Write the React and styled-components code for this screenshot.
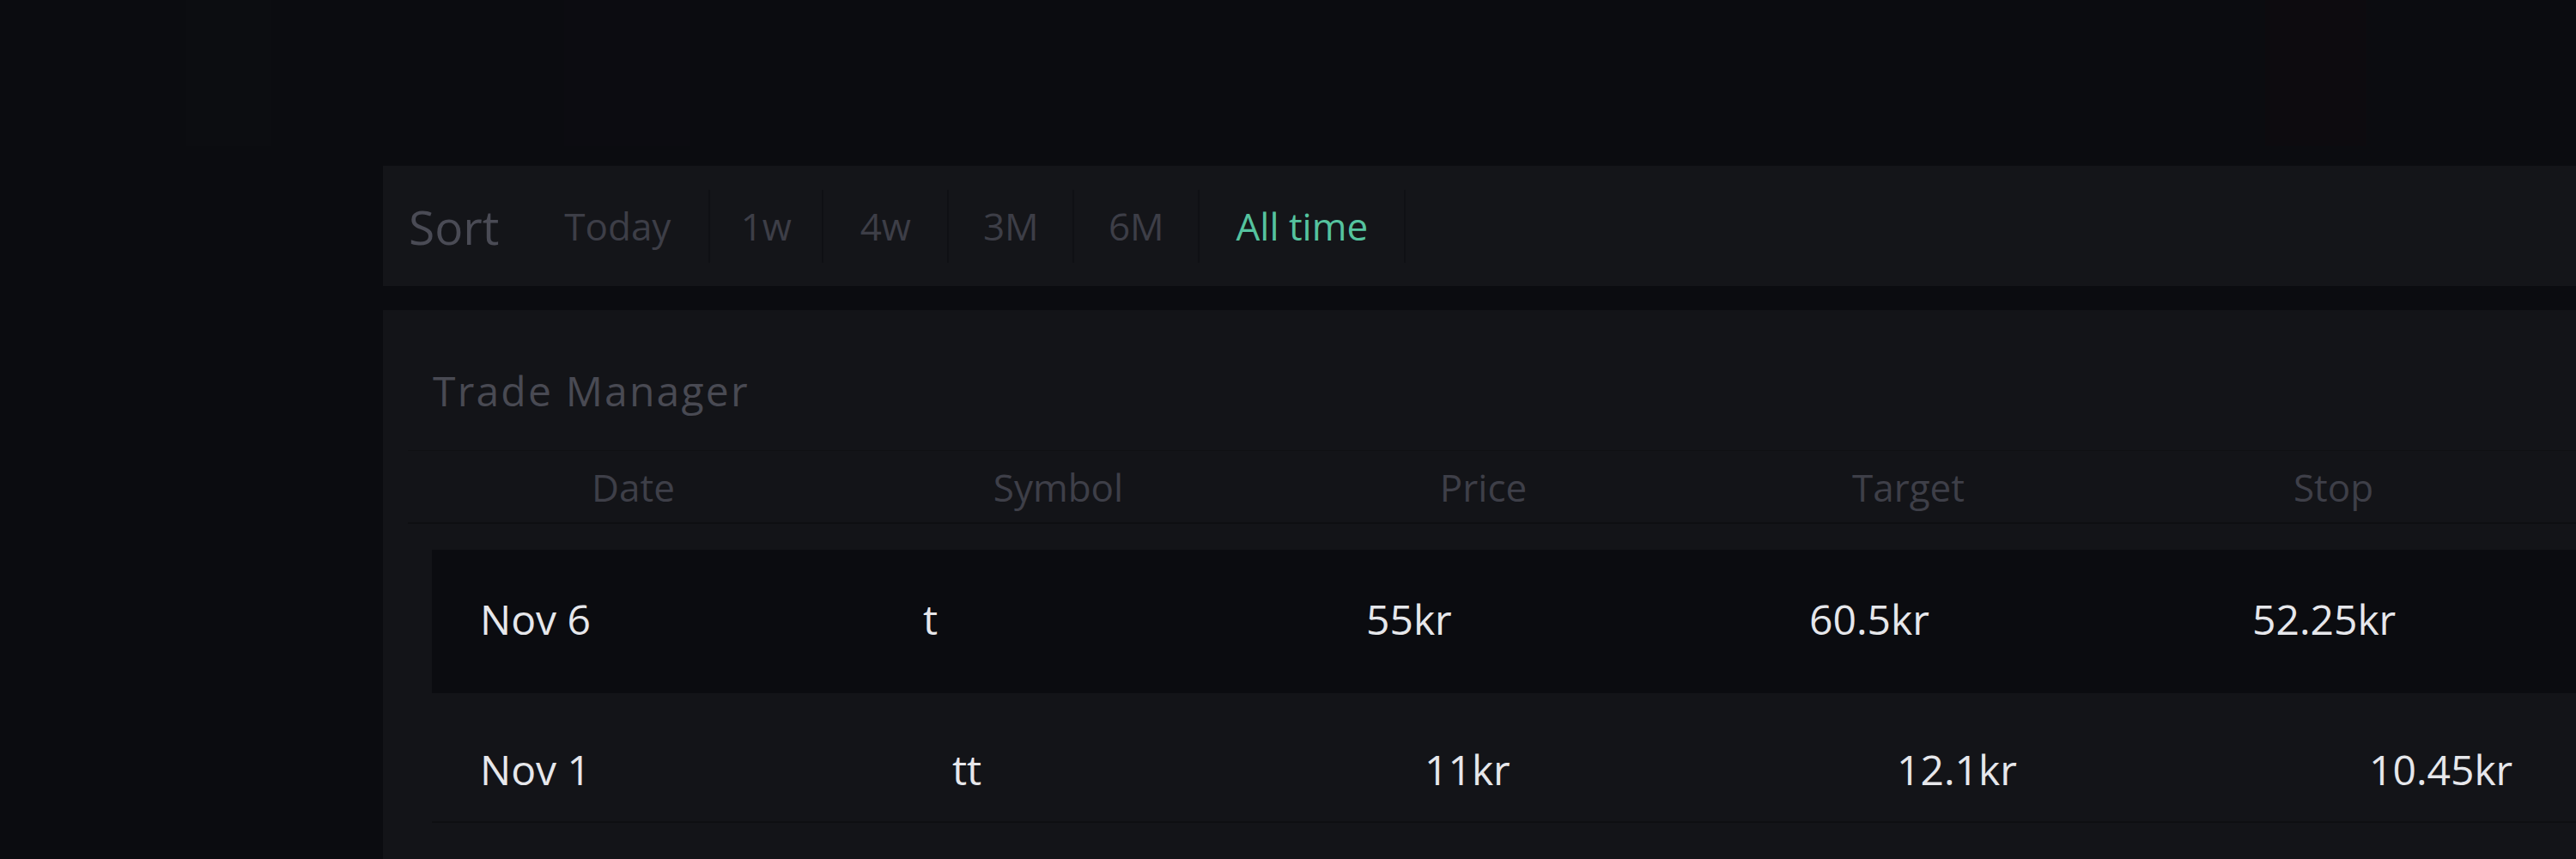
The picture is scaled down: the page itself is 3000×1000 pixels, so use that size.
import React from 'react';
import styled, { createGlobalStyle } from 'styled-components';

const GlobalStyle = createGlobalStyle`
  html, body {
    margin: 0;
    padding: 0;
    background: #0b0c10;
    width: 3000px;
    height: 1000px;
    overflow: hidden;
  }
  * {
    box-sizing: border-box;
  }
`;

const sans = `"Open Sans", "Noto Sans", sans-serif`;

const tabs = [
  { label: 'Today', w: 214 },
  { label: '1w', w: 132 },
  { label: '4w', w: 146 },
  { label: '3M', w: 146 },
  { label: '6M', w: 146 },
  { label: 'All time', w: 240 },
];
const columns = ['Date', 'Symbol', 'Price', 'Target', 'Stop'];
const trades = [
  { date: 'Nov 6', symbol: 't', price: '55kr', target: '60.5kr', stop: '52.25kr' },
  { date: 'Nov 1', symbol: 'tt', price: '11kr', target: '12.1kr', stop: '10.45kr' },
];

const Page = styled.div`
  width: 3000px;
  height: 1000px;
  display: flex;
  flex-direction: column;
  background: #0b0c10;
  overflow: hidden;
`;

// faint blurred tiles along the top edge of the shot
const GhostRow = styled.div`
  height: 170px;
  flex: none;
  display: grid;
  grid-template-columns: 217px 99px 341px 147px 1834px 118px 1fr;
`;

const Ghost = styled.div`
  background: ${(p) => p.$tint || 'transparent'};
`;

const Main = styled.div`
  flex: 1;
  display: flex;
  flex-direction: column;
  gap: 28px;
  padding: 23px 0 0 446px;
  min-height: 0;
`;

const SortBar = styled.div`
  height: 140px;
  flex: none;
  display: flex;
  align-items: center;
  padding-left: 30px;
  background: #141519;
`;

const SortLabel = styled.span`
  font-family: ${sans};
  font-size: 55px;
  color: #4a4b55;
  margin-right: 32px;
  line-height: 1;
`;

const Tab = styled.div`
  width: ${(p) => p.$w}px;
  height: 85px;
  display: flex;
  align-items: center;
  justify-content: center;
  border-right: 2px solid #0f1014;
  font-family: ${sans};
  font-size: 44px;
  line-height: 1;
  color: ${(p) => (p.$active ? '#55c39f' : '#3d3e47')};
`;

const Card = styled.div`
  flex: 1;
  background: #131418;
  padding: 70px 0 0 29px;
`;

const Title = styled.h2`
  margin: 0 0 45px 29px;
  font-family: ${sans};
  font-weight: 400;
  font-size: 48px;
  letter-spacing: 2.2px;
  line-height: 1;
  color: #494a53;
`;

const HeaderRow = styled.div`
  height: 86px;
  display: grid;
  grid-template-columns: repeat(6, 495px);
  align-items: center;
  padding-left: 15px;
  border-top: 1px solid #0f1013;
  border-bottom: 2px solid #0e0f12;
`;

const HeaderCell = styled.div`
  text-align: center;
  font-family: ${sans};
  font-size: 44px;
  line-height: 1;
  color: #3e3f48;
`;

const Rows = styled.div`
  padding: 30px 0 0 28px;
`;

const Row = styled.div`
  height: ${(p) => p.$h}px;
  display: grid;
  grid-template-columns: repeat(6, ${(p) => p.$col}px);
  align-items: start;
  padding: ${(p) => p.$top}px 0 0 56px;
  background: ${(p) => (p.$dark ? '#0b0c10' : 'transparent')};
  border-bottom: ${(p) => (p.$dark ? 'none' : '2px solid #0e0f12')};
`;

const Cell = styled.div`
  font-family: ${sans};
  font-size: 48px;
  font-weight: 500;
  line-height: 1;
  color: #e6e7eb;
`;

const rowLayout = [
  { h: 167, top: 57, col: 516, dark: true },
  { h: 151, top: 65, col: 550, dark: false },
];

export default function App() {
  return (
    <Page>
      <GlobalStyle />
      <GhostRow>
        <Ghost />
        <Ghost $tint="#0c0d11" />
        <Ghost />
        <Ghost $tint="#0c0c11" />
        <Ghost />
        <Ghost $tint="#0d0b0f" />
        <Ghost />
      </GhostRow>
      <Main>
        <SortBar>
          <SortLabel>Sort</SortLabel>
          {tabs.map((t) => (
            <Tab key={t.label} $w={t.w} $active={t.label === 'All time'}>
              {t.label}
            </Tab>
          ))}
        </SortBar>
        <Card>
          <Title>Trade Manager</Title>
          <HeaderRow>
            {columns.map((c) => (
              <HeaderCell key={c}>{c}</HeaderCell>
            ))}
          </HeaderRow>
          <Rows>
            {trades.map((t, i) => {
              const l = rowLayout[i];
              return (
                <Row key={t.date} $h={l.h} $top={l.top} $col={l.col} $dark={l.dark}>
                  <Cell>{t.date}</Cell>
                  <Cell>{t.symbol}</Cell>
                  <Cell>{t.price}</Cell>
                  <Cell>{t.target}</Cell>
                  <Cell>{t.stop}</Cell>
                </Row>
              );
            })}
          </Rows>
        </Card>
      </Main>
    </Page>
  );
}
